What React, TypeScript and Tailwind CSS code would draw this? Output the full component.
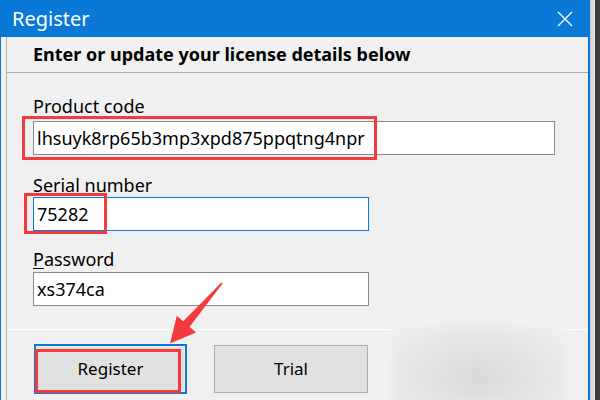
const Label = ({ text, hot }: { text: string; hot?: number }) => (
    <div className="h-[20px] leading-[20px] text-[18px] text-black">
        {hot === undefined ? text : (
            <>
                {text.slice(0, hot)}
                <span className="underline underline-offset-2">{text.charAt(hot)}</span>
                {text.slice(hot + 1)}
            </>
        )}
    </div>
)

export default function App() {
    return (
        <div className="relative w-[600px] h-[400px] flex bg-[#3b3b3b] font-['Noto_Sans',sans-serif] overflow-hidden">
            <div className="w-[590px] h-full flex flex-col bg-[#f0f0f0] border-l border-r-2 border-[#0a78d7]">
                <div className="h-[37px] shrink-0 bg-[#0a78d7] flex items-center justify-between pl-[11px] pr-[15px]">
                    <span className="text-white text-[20px] leading-none">Register</span>
                    <svg width="16" height="16" viewBox="0 0 16 16" className="text-white">
                        <path d="M1 1L15 15M15 1L1 15" stroke="currentColor" strokeWidth="1.3" fill="none" />
                    </svg>
                </div>
                <div className="flex-1 ml-[5px] border-l border-[#b9b9b9] flex flex-col">
                    <div className="h-[36px] shrink-0 border-b border-[#a9a9a9] flex items-center pl-[26px]">
                        <span className="text-[18px] font-bold text-black">Enter or update your license details below</span>
                    </div>
                    <div className="pl-[26px] pt-[23px] flex flex-col">
                        <Label text="Product code" />
                        <div className="mt-[5px] w-[522px] h-[34px] bg-white border border-[#8a8a8a] flex items-center pl-[3px] text-[18px] text-black">
                            lhsuyk8rp65b3mp3xpd875ppqtng4npr
                        </div>
                        <div className="mt-[20px]">
                            <Label text="Serial number" hot={0} />
                        </div>
                        <div className="mt-[2px] w-[336px] h-[34px] bg-white border border-[#0a78d7] flex items-center pl-[3px] text-[18px] text-black">
                            75282
                        </div>
                        <div className="mt-[18px]">
                            <Label text="Password" hot={0} />
                        </div>
                        <div className="mt-[3px] w-[336px] h-[34px] bg-white border border-[#8a8a8a] flex items-center pl-[3px] text-[18px] text-black">
                            xs374ca
                        </div>
                    </div>
                    <div className="mt-[23px] h-px bg-white" />
                    <div className="mt-[14px] pl-[27px] flex items-start gap-[27px]">
                        <div className="w-[153px] h-[50px] border-2 border-[#0a78d7] p-px">
                            <div className="w-full h-full bg-[#e1e1e1] flex items-center justify-center text-[17px] text-black">Register</div>
                        </div>
                        <div className="mt-px w-[154px] h-[48px] border border-[#adadad] bg-[#e1e1e1] flex items-center justify-center text-[17px] text-black">
                            Trial
                        </div>
                    </div>
                </div>
            </div>
            <div className="w-[5px] h-full bg-gradient-to-r from-[#c6d0da] to-[#e6e6e6]" />

            {/* annotation overlays */}
            <div className="absolute left-[391px] top-[325px] w-[174px] h-[80px] blur-[3px] bg-[radial-gradient(ellipse_at_50%_65%,#d9d9d9_0%,#e4e4e4_45%,#eeeeee_85%)]" />
            <div className="absolute left-[22px] top-[116px] w-[355px] h-[44px] border-[3px] border-[#f43a3c]" />
            <div className="absolute left-[24px] top-[193px] w-[83px] h-[41px] border-[3px] border-[#f43a3c]" />
            <div className="absolute left-[35px] top-[349px] w-[146px] h-[44px] border-[3px] border-[#f43a3c]" />
            <svg className="absolute left-0 top-0 pointer-events-none" width="600" height="400">
                <polygon
                    fill="#f43a3c"
                    points="222.6,283.4 189.6,326.8 196,332.4 170,343.5 176.8,315.8 183.2,321.2 221.4,282.6"
                />
            </svg>
        </div>
    )
}
